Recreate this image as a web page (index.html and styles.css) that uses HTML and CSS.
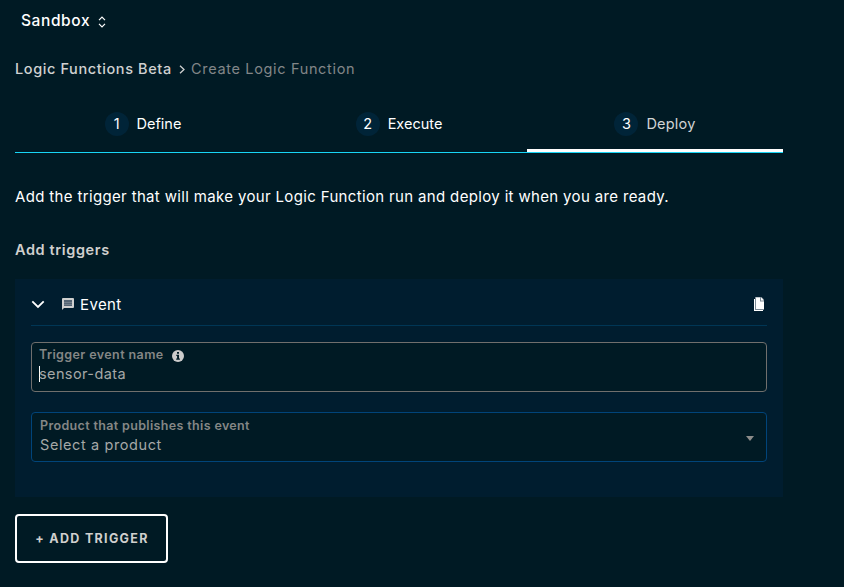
FILE: index.html
```html
<!DOCTYPE html>
<html lang="en">
<head>
<meta charset="utf-8">
<title>Create Logic Function</title>
<link rel="stylesheet" href="styles.css">
</head>
<body>
<header class="workspace"><span class="workspace-name">Sandbox</span>
<svg width="8" height="12" viewBox="0 0 8 12" fill="none" stroke="currentColor" stroke-width="1.2"><path d="M1 4.200 4 1.200l3 3M1 7.800l3 3 3-3"/></svg></header>
<main class="page">
<nav class="breadcrumb"><a class="crumb">Logic Functions Beta</a><svg width="6" height="9" viewBox="0 0 6 9" fill="none" stroke="currentColor" stroke-width="1.3"><path d="m1 .7 4 3.800-4 3.800"/></svg><span class="crumb-current">Create Logic Function</span></nav>
<ol class="steps">
<li class="step"><span class="num">1</span><span class="step-name define">Define</span></li>
<li class="step"><span class="num">2</span><span class="step-name execute">Execute</span></li>
<li class="step active"><span class="num">3</span><span class="step-name deploy">Deploy</span></li>
</ol>
<p class="intro"><span class="intro-text">Add the trigger that will make your Logic Function run and deploy it when you are ready.</span></p>
<h2 class="title"><span class="title-text">Add triggers</span></h2>
<section class="panel">
<div class="panel-head">
<svg class="chevron" width="14" height="9" viewBox="0 0 14 9" fill="none" stroke="#fff" stroke-width="1.800"><path d="m1.300 1.300 5.700 5.700 5.700-5.700"/></svg>
<svg class="message" width="12" height="12" viewBox="0 0 12 12"><path fill="#cfcfcf" d="M1 0h10q1 0 1 1v8q0 1-1 1H2L0 12V1Q0 0 1 0Z"/><path fill="#536373" d="M2 2h8v6H2z"/><path stroke="#8d969e" d="M2 4.500h8M2 6.500h8" stroke-width=".5"/></svg>
<span class="event">Event</span>
<svg class="copy" width="11" height="14" viewBox="0 0 11 14"><path fill="#fff" d="M0 2h1v11h8v1H0Z"/><path fill="#7d8b97" d="M1 0h6.500L10 2.500V13H1Z"/><path fill="#fff" d="M2 .5h4V4.500h4V12H2Z"/><path fill="#fff" d="M7 .8h.5L9.500 3v.5H7Z"/></svg>
</div>
<div class="field focused">
<div class="label"><span class="name-label">Trigger event name</span><svg class="info" width="12" height="12" viewBox="0 0 12 12"><circle cx="6" cy="6" r="6" fill="#ccc"/><path fill="#001b26" d="M5 2h2v1.700H5zM4.300 4.800H7v3.700h.9v1.200H4.200V8.500h.9V6h-.8Z"/></svg></div>
<div class="value"><span class="caret"></span><span class="sensor">sensor-data</span></div>
</div>
<div class="field select">
<div class="select-copy"><div class="label"><span class="product-label">Product that publishes this event</span></div>
<div class="value"><span class="product">Select a product</span></div></div>
<svg width="8" height="5" viewBox="0 0 8 5"><path fill="#8c8c8a" d="M0 0h8L4 5Z"/></svg>
</div>
</section>
<button class="add"><span class="add-text">+ ADD TRIGGER</span></button>
</main>
</body>
</html>
```

FILE: styles.css
```css
* { box-sizing: border-box; }
body { margin: 0; height: 587px; overflow: hidden; background: #001a24; color: #fff; font: 15px/20px Inter, "Liberation Sans", sans-serif; }
span, a { white-space: nowrap; }
svg { display: block; flex: none; }
.workspace { display: flex; align-items: center; height: 42px; padding-left: 21px; gap: 8px; }
.workspace-name { font-weight: 500; font-size: 15.500px; letter-spacing: .6px; }
.workspace svg { margin-top: 2px; }
.page { width: 783px; padding-left: 15px; }
.breadcrumb { display: flex; align-items: center; height: 54px; color: #d0d1d1; font-size: 14.500px; }
.crumb { font-weight: 500; width: 157px; letter-spacing: .6px; }
.breadcrumb svg { margin: 0 6px 0 7px; }
.crumb-current { color: #828688; letter-spacing: .66px; }
.steps { display: flex; list-style: none; margin: 0; padding: 0; height: 57px; border-bottom: 1px solid #18d5f5; }
.step { flex: 1; display: flex; align-items: center; justify-content: center; gap: 8px; font-size: 14.500px; }
.step.active { border-bottom: 3px solid #fff; padding-top: 3px; }
.num { width: 24px; height: 24px; border-radius: 50%; background: #002438; text-align: center; line-height: 24px; }
.deploy { color: #d1d3d4; letter-spacing: .2px; }
.intro { margin: 34px 0 0; height: 20px; }
.intro-text { letter-spacing: .345px; }
.title { margin: 33px 0 0; height: 20px; font-size: 14.500px; font-weight: 600; color: #d0d0ce; }
.title-text { letter-spacing: .62px; }
.panel { margin-top: 19px; height: 218px; padding: 0 16px; background: #001d2f; }
.panel-head { display: flex; align-items: center; height: 47px; padding-top: 5px; border-bottom: 1px solid #003655; }
.message { margin: -1px 6px 0 17px; }
.event { letter-spacing: .4px; }
.copy { margin: -1px 2px 0 auto; }
.field { height: 50px; margin-top: 16px; padding: 2px 7px; border: 1px solid #706f6d; border-radius: 4px; background: #001a24; }
.label { display: flex; align-items: center; height: 19px; color: #858786; font-size: 12.500px; font-weight: 600; gap: 8px; }
.info { margin-top: 2px; }
.name-label { letter-spacing: .4px; }
.product-label { letter-spacing: .35px; }
.value { display: flex; align-items: center; height: 20px; color: #a5a8a7; font-size: 14.500px; }
.sensor { letter-spacing: .4px; }
.product { letter-spacing: .6px; }
.caret { width: 1px; height: 16px; margin-right: -1px; background: #fff; }
.select { display: flex; align-items: flex-start; justify-content: space-between; margin-top: 20px; padding: 3px 12px 0 8px; border-color: #00447a; }
.select svg { margin-top: 20px; }
.add { display: flex; align-items: center; justify-content: center; width: 153px; height: 49px; margin-top: 17px; padding: 0; border: 2px solid #fff; border-radius: 4px; background: transparent; color: #d0d0ce; font: 700 12.500px/20px Inter, sans-serif; }
.add-text { letter-spacing: 1.300px; margin-right: -1px; }
```
